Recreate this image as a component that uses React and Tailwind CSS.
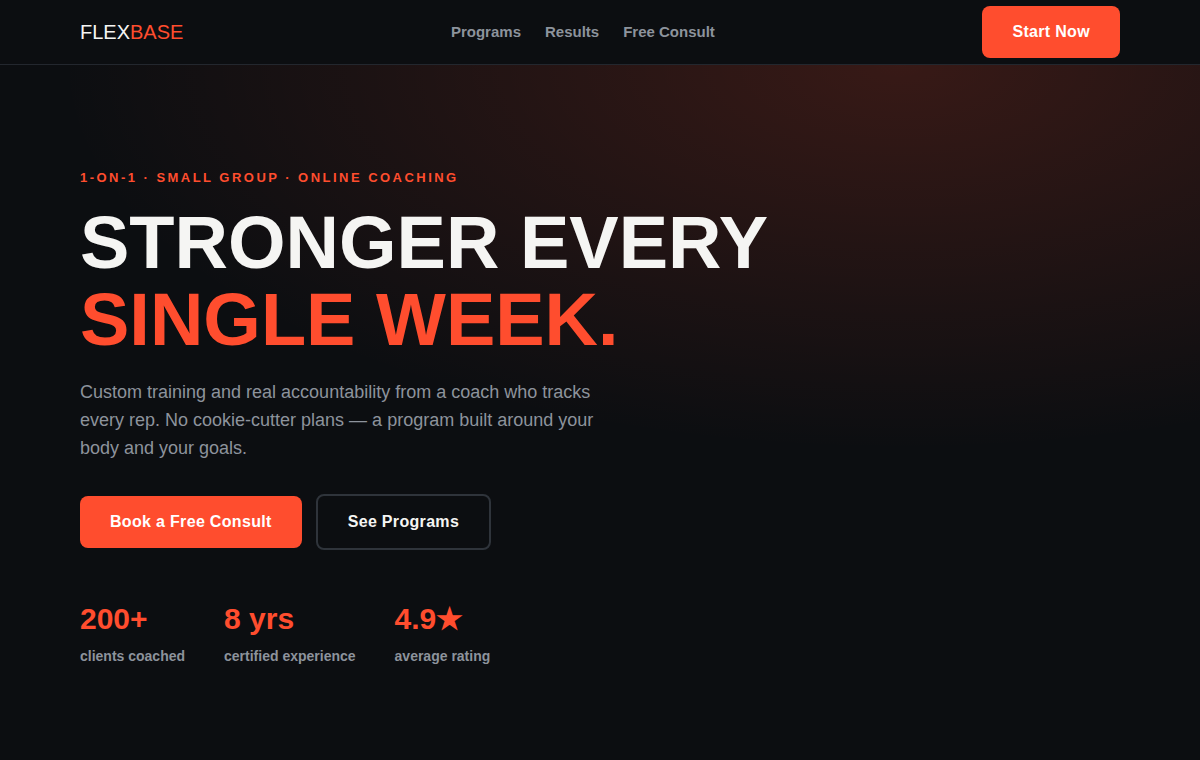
import React from "react";

const links = [
  { label: "Programs", href: "#programs" },
  { label: "Results", href: "#results" },
  { label: "Free Consult", href: "#consult" },
];

const stats = [
  { value: "200+", label: "clients coached" },
  { value: "8 yrs", label: "certified experience" },
  { value: "4.9★", label: "average rating" },
];

function Button({ children, ghost }) {
  const base = "rounded-lg px-[30px] text-base leading-[26px] py-[13px] font-bold tracking-[0.02em] cursor-pointer";
  const look = ghost
    ? "border-2 border-[#2f343b] text-[#f5f5f3] hover:border-[#ff4d2e]"
    : "bg-[#ff4d2e] text-white hover:bg-[#ff6347]";
  return (
    <button type="button" className={`${base} ${look}`}>
      {children}
    </button>
  );
}

function Header() {
  return (
    <header className="border-b border-[#23272e] bg-[#0c0e11]">
      <div className="mx-auto flex h-16 max-w-[1088px] items-center justify-between px-6">
        <a href="#top" className="text-xl text-[#f5f5f3]">
          FLEX<span className="text-[#ff4d2e]">BASE</span>
        </a>
        <nav className="flex gap-6">
          {links.map((l) => (
            <a key={l.label} href={l.href} className="text-[15px] font-bold text-[#8d939c] hover:text-white">
              {l.label}
            </a>
          ))}
        </nav>
        <Button>Start Now</Button>
      </div>
    </header>
  );
}

export default function App() {
  return (
    <div id="top" className="min-h-screen bg-[#0c0e11] font-['Liberation_Sans',Arial,sans-serif] text-[#f5f5f3]">
      <Header />

      {/* Hero */}
      <section className="bg-[radial-gradient(1200px_550px_at_75%_0%,rgba(255,77,46,0.18),transparent_70%)] pt-[103px] pb-[90px]">
        <div className="mx-auto max-w-[1088px] px-6">
          <p className="text-[13px] leading-5 font-bold tracking-[0.19em] text-[#ff4d2e] uppercase">
            1-on-1 · Small group · Online coaching
          </p>
          <h1 className="mt-4 text-[74px] leading-[77px] font-bold uppercase">
            Stronger every
            <br />
            <span className="text-[#ff4d2e]">single week.</span>
          </h1>
          <p className="mt-5 max-w-[520px] text-[18px] leading-7 text-[#8d939c]">
            Custom training and real accountability from a coach who tracks every rep. No cookie-cutter
            plans — a program built around your body and your goals.
          </p>

          <div className="mt-8 flex flex-wrap items-center gap-[14px]">
            <Button>Book a Free Consult</Button>
            <Button ghost>See Programs</Button>
          </div>

          {/* Stats */}
          <div className="mt-11 flex flex-wrap gap-[39px]">
            {stats.map((s) => (
              <div key={s.label}>
                <div className="text-[30px] leading-[50px] font-bold text-[#ff4d2e]">{s.value}</div>
                <div className="text-sm leading-6 font-bold text-[#8d939c]">{s.label}</div>
              </div>
            ))}
          </div>
        </div>
      </section>
    </div>
  );
}
